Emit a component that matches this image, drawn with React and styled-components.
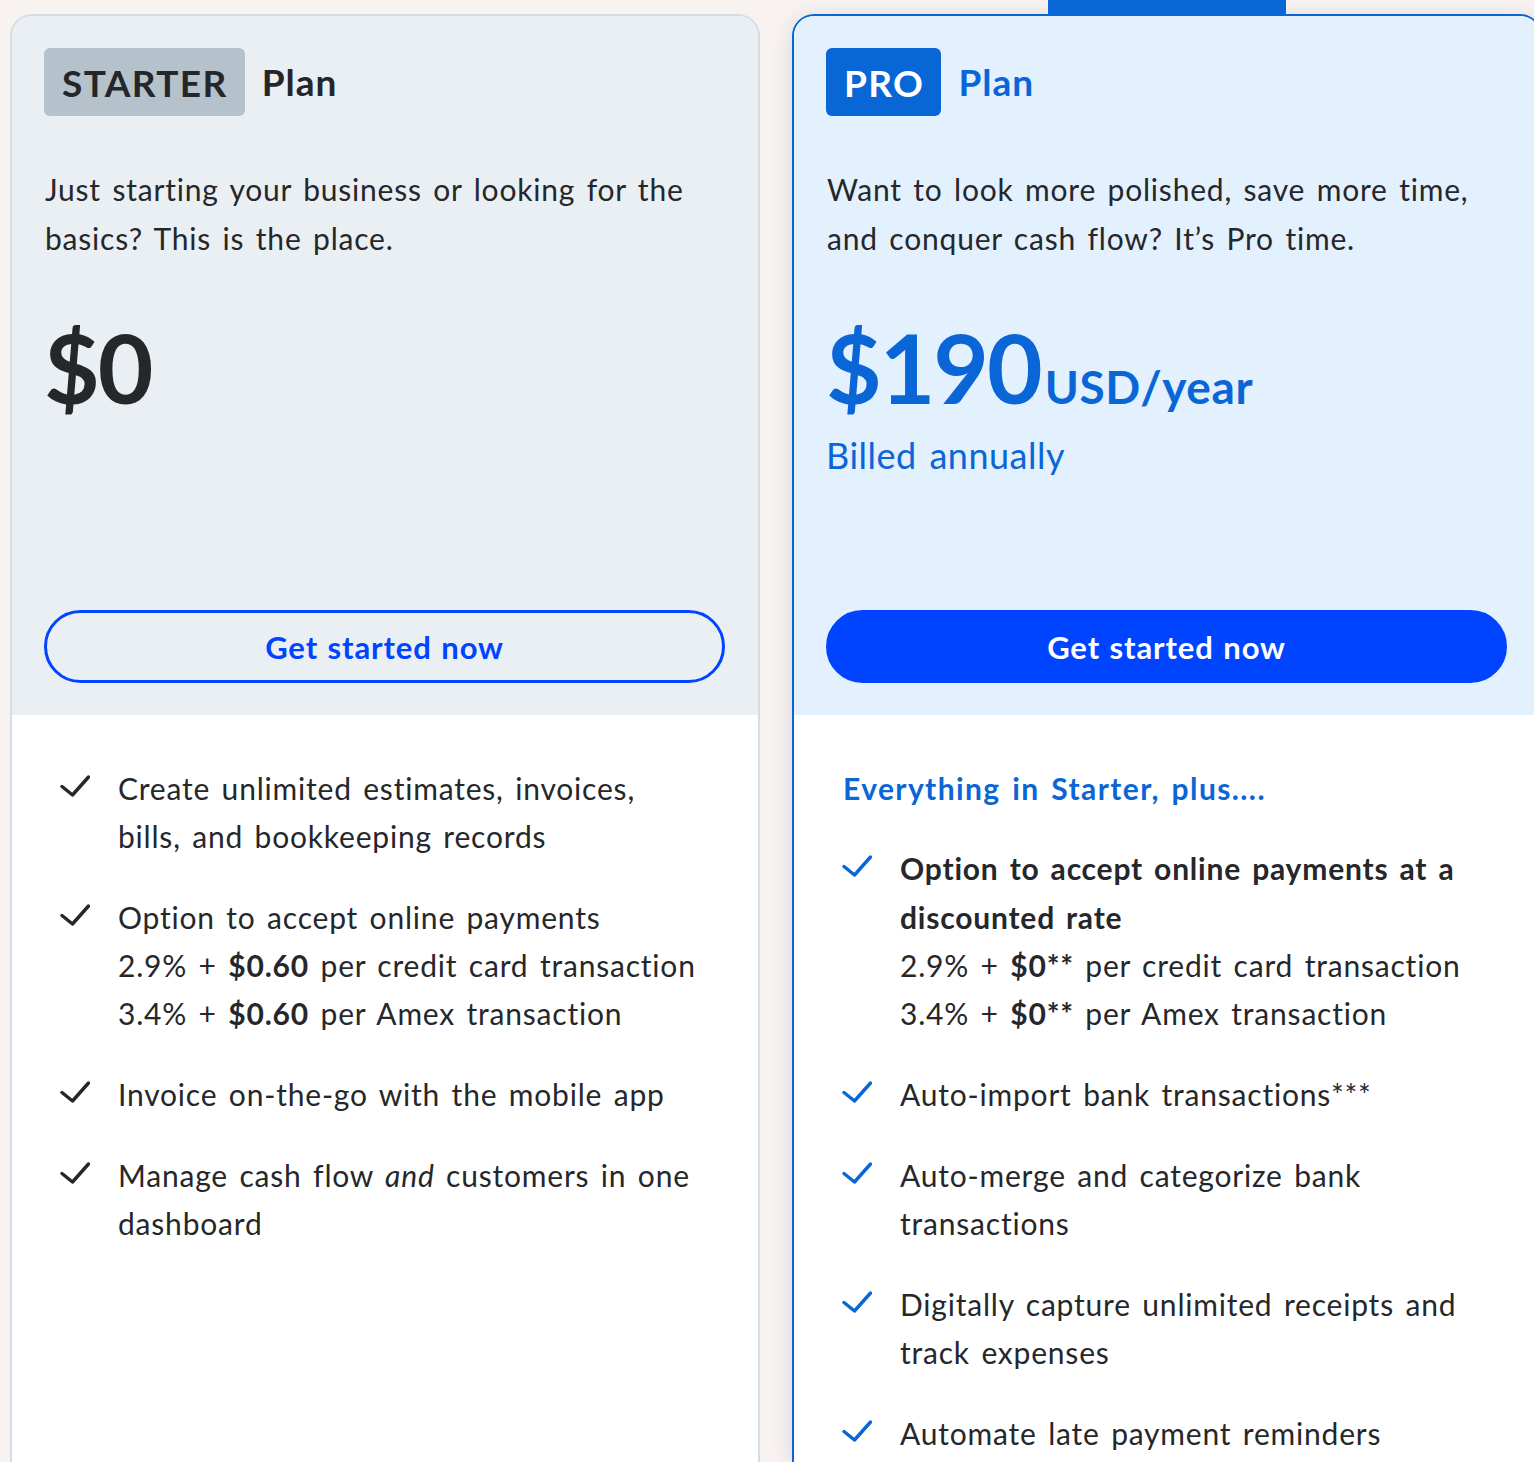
import styled, { createGlobalStyle, css } from 'styled-components'

const GlobalStyle = createGlobalStyle`
  html, body {
    margin: 0;
    padding: 0;
    background: #f8f3f1;
    overflow: hidden;
  }
  body {
    font-family: Lato, "Open Sans", sans-serif;
    color: #25272b;
    letter-spacing: 0.8px;
    word-spacing: 3px;
  }
`

const Page = styled.div`
  display: flex;
  gap: 32px;
  padding: 14px 0 0 10px;
  width: 1600px;
  height: 1462px;
  box-sizing: border-box;
`

const Card = styled.section`
  position: relative;
  flex: 0 0 750px;
  box-sizing: border-box;
  display: flex;
  flex-direction: column;
  background: #fff;
  border: 2px solid ${(p) => (p.pro ? '#0a66d6' : '#d4dce5')};
  border-bottom: none;
  border-radius: 22px 22px 0 0;
  overflow: visible;
  ${(p) =>
    p.pro &&
    css`
      box-shadow: 0 4px 22px rgba(30, 50, 90, 0.14);
    `}
`

const Ribbon = styled.div`
  position: absolute;
  top: -44px;
  left: 254px;
  width: 238px;
  height: 44px;
  background: #0966d6;
  color: #fff;
  font-weight: 700;
  font-size: 20px;
  text-align: center;
  line-height: 34px;
  letter-spacing: 1px;
`

const Top = styled.div`
  flex: 0 0 699px;
  box-sizing: border-box;
  display: flex;
  flex-direction: column;
  padding: 32px 33px 32px 32px;
  background: ${(p) => (p.pro ? '#e3f0fe' : '#eaeff3')};
  border-radius: 20px 20px 0 0;
`

const TitleRow = styled.div`
  display: flex;
  align-items: center;
  gap: 17px;
  height: 68px;
  margin-top: -1px;
`

const Badge = styled.span`
  display: inline-flex;
  align-items: center;
  height: 68px;
  margin-top: 2px;
  padding: 0 17px 0 18px;
  border-radius: 6px;
  font-size: 37px;
  font-weight: 700;
  letter-spacing: 1.4px;
  background: ${(p) => (p.pro ? '#0966d6' : '#b5c2cc')};
  color: ${(p) => (p.pro ? '#fff' : '#24262a')};
`

const PlanWord = styled.span`
  font-size: 37px;
  font-weight: 700;
  letter-spacing: 1px;
  color: ${(p) => (p.pro ? '#0a66d6' : '#24262a')};
`

const Description = styled.p`
  margin: 50px 0 0 1px;
  font-size: 30px;
  line-height: 49px;
  color: #25272b;
`

const PriceRow = styled.div`
  display: flex;
  align-items: baseline;
  margin-top: 50px;
  color: ${(p) => (p.pro ? '#0a66d6' : '#25272b')};
`

const Amount = styled.span`
  font-size: 96px;
  line-height: 108px;
  font-weight: 700;
  letter-spacing: -2px;
`

const Period = styled.span`
  font-size: 46px;
  font-weight: 700;
  letter-spacing: 0.6px;
  margin-left: 4px;
`

const Billed = styled.div`
  margin-top: 10px;
  font-size: 36px;
  line-height: 48px;
  letter-spacing: 0.5px;
  color: #0a66d6;
`

const CtaButton = styled.button`
  margin-top: auto;
  height: 73px;
  width: 100%;
  border-radius: 40px;
  font-family: inherit;
  font-size: 31px;
  font-weight: 700;
  letter-spacing: 0.9px;
  word-spacing: 1px;
  cursor: pointer;
  border: 3px solid #0044ff;
  background: ${(p) => (p.primary ? '#0044ff' : 'transparent')};
  color: ${(p) => (p.primary ? '#fff' : '#0044ff')};
`

const Features = styled.ul`
  list-style: none;
  margin: 0;
  padding: 49px 58px 40px 48px;
  display: flex;
  flex-direction: column;
  gap: 33px;
`

const SectionLead = styled.li`
  font-size: 30px;
  line-height: 48px;
  font-weight: 700;
  letter-spacing: 1.4px;
  color: #0a66d6;
  margin: 0 0 -1px 1px;
`

const Item = styled.li`
  display: flex;
  gap: 28px;
  font-size: 30px;
  line-height: 48px;
  color: #25272b;
  svg {
    flex: 0 0 30px;
    margin-top: 11px;
  }
  strong {
    font-weight: 700;
  }
`

const Strong = styled.div`
  font-weight: 700;
  line-height: 48.5px;
`

const Check = ({ color }) => (
  <svg width="30" height="22" viewBox="0 0 30 22">
    <path
      d="M2 11.5 L12.5 20 L28.5 2"
      fill="none"
      stroke={color}
      strokeWidth="3.4"
      strokeLinecap="round"
      strokeLinejoin="round"
    />
  </svg>
)

const starterItems = [
  <>Create unlimited estimates, invoices, bills, and bookkeeping records</>,
  <>
    Option to accept online payments
    <br />
    2.9% + <strong>$0.60</strong> per credit card transaction
    <br />
    3.4% + <strong>$0.60</strong> per Amex transaction
  </>,
  <>Invoice on-the-go with the mobile app</>,
  <>
    Manage cash flow <em>and</em> customers in one dashboard
  </>,
]

const proItems = [
  <>
    <Strong>Option to accept online payments at a discounted rate</Strong>
    2.9% + <strong>$0**</strong> per credit card transaction
    <br />
    3.4% + <strong>$0**</strong> per Amex transaction
  </>,
  <>Auto-import bank transactions***</>,
  <>Auto-merge and categorize bank transactions</>,
  <>Digitally capture unlimited receipts and track expenses</>,
  <>Automate late payment reminders</>,
  <>Customize branding on invoices and estimates</>,
]

export default function App() {
  return (
    <>
      <GlobalStyle />
      <Page>
        <Card>
          <Top>
            <TitleRow>
              <Badge>STARTER</Badge>
              <PlanWord>Plan</PlanWord>
            </TitleRow>
            <Description>
              Just starting your business or looking for the basics? This is the place.
            </Description>
            <PriceRow>
              <Amount>$0</Amount>
            </PriceRow>
            <CtaButton>Get started now</CtaButton>
          </Top>
          <Features>
            {starterItems.map((it, i) => (
              <Item key={i}>
                <Check color="#25272b" />
                <div>{it}</div>
              </Item>
            ))}
          </Features>
        </Card>

        <Card pro>
          <Ribbon>MOST POPULAR</Ribbon>
          <Top pro>
            <TitleRow>
              <Badge pro>PRO</Badge>
              <PlanWord pro>Plan</PlanWord>
            </TitleRow>
            <Description>
              Want to look more polished, save more time, and conquer cash flow? It’s Pro time.
            </Description>
            <PriceRow pro>
              <Amount>$190</Amount>
              <Period>USD/year</Period>
            </PriceRow>
            <Billed>Billed annually</Billed>
            <CtaButton primary>Get started now</CtaButton>
          </Top>
          <Features>
            <SectionLead>Everything in Starter, plus....</SectionLead>
            {proItems.slice(0, 5).map((it, i) => (
              <Item key={i}>
                <Check color="#0a66d6" />
                <div>{it}</div>
              </Item>
            ))}
          </Features>
        </Card>
      </Page>
    </>
  )
}
